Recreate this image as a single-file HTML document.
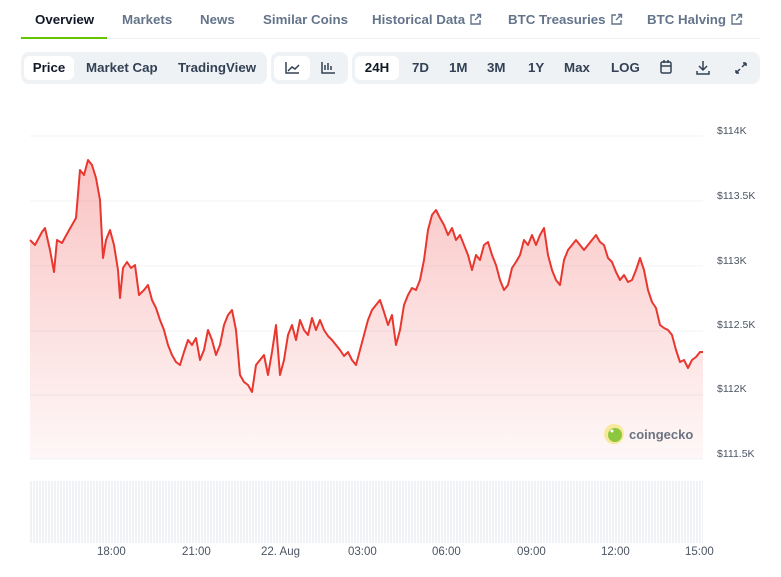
<!DOCTYPE html>
<html><head><meta charset="utf-8"><style>
*{box-sizing:border-box;margin:0;padding:0}
body{width:781px;height:577px;background:#fff;font-family:"Liberation Sans",sans-serif;position:relative;overflow:hidden;color:#4b5563}
.tabs{position:absolute;left:20px;top:0;width:740px;height:39px;border-bottom:1px solid #eef0f3}
.tab{position:absolute;top:12px;font-size:13.3px;font-weight:bold;color:#64748b;white-space:nowrap}
.tab.a{color:#111827}
.ul{position:absolute;left:1px;top:37px;width:86px;height:2px;background:#65c300}
.grp{position:absolute;top:52px;height:32px;background:#eff2f5;border-radius:8px}
.btn{position:absolute;top:4px;height:24px;font-size:13.3px;font-weight:bold;color:#334155;line-height:24px;white-space:nowrap}
.sel{background:#fff;border-radius:6px;color:#111827}
.yl{position:absolute;left:717px;font-size:10.5px;color:#4b5563}
.xl{position:absolute;top:546px;font-size:11.5px;color:#4b5563}
svg{position:absolute;left:0;top:0}
.ext{display:inline-block;vertical-align:-2px;margin-left:4px}
</style></head><body>
<div class="tabs">
<span class="tab a" style="left:15px">Overview</span>
<span class="tab" style="left:102px">Markets</span>
<span class="tab" style="left:180px">News</span>
<span class="tab" style="left:243px">Similar Coins</span>
<span class="tab" style="left:352px">Historical Data<svg class="ext" style="position:static" width="13" height="13"><path d="M6 2H2v9h9V7M8 1.5h3.5V5M11.5 1.5L6 7" fill="none" stroke="#64748b" stroke-width="1.4"/></svg></span>
<span class="tab" style="left:488px">BTC Treasuries<svg class="ext" style="position:static" width="13" height="13"><path d="M6 2H2v9h9V7M8 1.5h3.5V5M11.5 1.5L6 7" fill="none" stroke="#64748b" stroke-width="1.4"/></svg></span>
<span class="tab" style="left:627px">BTC Halving<svg class="ext" style="position:static" width="13" height="13"><path d="M6 2H2v9h9V7M8 1.5h3.5V5M11.5 1.5L6 7" fill="none" stroke="#64748b" stroke-width="1.4"/></svg></span>
<div class="ul"></div>
</div>
<div class="grp" style="left:21px;width:246px">
<span class="btn sel" style="left:3px;width:50px;text-align:center">Price</span>
<span class="btn" style="left:65px">Market Cap</span>
<span class="btn" style="left:157px">TradingView</span>
</div>
<div class="grp" style="left:271px;width:77px">
<span class="btn sel" style="left:3px;width:36px"></span>
<svg width="77" height="32" style="position:absolute;left:0;top:0"><path d="M15 10v11h13M17 19l4-4 3 2 4-4" fill="none" stroke="#334155" stroke-width="1.5"/><path d="M51 10v11h13M54 18v-5M57 18v-7M60 18v-4" fill="none" stroke="#334155" stroke-width="1.5"/></svg>
</div>
<div class="grp" style="left:352px;width:408px">
<span class="btn sel" style="left:3px;width:44px;text-align:center">24H</span>
<span class="btn" style="left:60px">7D</span>
<span class="btn" style="left:97px">1M</span>
<span class="btn" style="left:135px">3M</span>
<span class="btn" style="left:176px">1Y</span>
<span class="btn" style="left:212px">Max</span>
<span class="btn" style="left:259px">LOG</span>
<svg width="408" height="32" style="position:absolute;left:0;top:0"><g fill="none" stroke="#334155" stroke-width="1.5"><rect x="309" y="10" width="10" height="11" rx="1.5"/><path d="M309 14h10M312 8v3M316 8v3"/><path d="M351 9v8M347 14l4 4 4-4M345 19v3h12v-3"/><path d="M384 21l4-4M384 21h3M384 21v-3M394 11l-4 4M394 11h-3M394 11v3"/></g></svg>
</div>
<svg width="781" height="577">
<defs><linearGradient id="g" x1="0" y1="0" x2="0" y2="1"><stop offset="0" stop-color="#ef4444" stop-opacity=".32"/><stop offset="1" stop-color="#ef4444" stop-opacity=".04"/></linearGradient>
<pattern id="v" width="3" height="10" patternUnits="userSpaceOnUse"><rect width="2" height="10" fill="#f0f2f6"/></pattern></defs>
<g stroke="#f1f3f6" stroke-width="1"><path d="M30 136H703M30 201H703M30 266H703M30 331H703M30 395H703M30 459H703"/></g>
<rect x="30" y="481" width="673" height="62" fill="url(#v)"/>
<path d="M30 240L35 245L42 232L45 228L50 250L54 272L57 240L62 243L68 232L72 225L76 218L80 170L84 175L88 160L92 165L96 178L100 200L103 258L106 240L110 230L114 245L118 270L120 298L123 268L127 262L131 268L135 265L139 295L144 290L148 285L152 300L156 308L160 320L164 330L168 345L172 355L176 362L180 365L184 352L188 340L192 345L196 338L200 360L204 350L208 330L212 340L216 355L220 345L224 325L228 315L232 310L236 330L240 375L244 382L248 385L252 392L256 365L260 360L264 355L268 375L272 352L276 325L280 375L284 360L288 335L292 325L296 340L300 320L304 330L308 335L312 318L316 330L320 320L324 330L328 336L332 340L336 345L340 350L344 356L348 352L352 360L356 365L360 350L364 335L368 320L372 310L376 305L380 300L384 312L388 325L392 315L396 345L400 330L404 305L408 295L412 288L416 290L420 280L424 260L428 230L432 215L436 210L440 218L444 225L448 235L452 228L456 240L460 235L464 245L468 255L472 270L476 255L480 260L484 245L488 242L492 255L496 265L500 280L504 290L508 285L512 268L516 262L520 255L524 240L528 245L532 235L536 245L540 235L544 228L548 255L552 270L556 280L560 285L564 260L568 250L572 245L576 240L580 245L584 250L588 245L592 240L596 235L600 242L604 245L608 258L612 262L616 272L620 280L624 275L628 282L632 280L636 270L640 258L644 270L648 290L652 302L656 308L660 325L664 328L668 330L672 335L676 350L680 362L684 360L688 368L692 360L696 357L700 352L703 352L703 459L30 459Z" fill="url(#g)"/>
<path d="M30 240L35 245L42 232L45 228L50 250L54 272L57 240L62 243L68 232L72 225L76 218L80 170L84 175L88 160L92 165L96 178L100 200L103 258L106 240L110 230L114 245L118 270L120 298L123 268L127 262L131 268L135 265L139 295L144 290L148 285L152 300L156 308L160 320L164 330L168 345L172 355L176 362L180 365L184 352L188 340L192 345L196 338L200 360L204 350L208 330L212 340L216 355L220 345L224 325L228 315L232 310L236 330L240 375L244 382L248 385L252 392L256 365L260 360L264 355L268 375L272 352L276 325L280 375L284 360L288 335L292 325L296 340L300 320L304 330L308 335L312 318L316 330L320 320L324 330L328 336L332 340L336 345L340 350L344 356L348 352L352 360L356 365L360 350L364 335L368 320L372 310L376 305L380 300L384 312L388 325L392 315L396 345L400 330L404 305L408 295L412 288L416 290L420 280L424 260L428 230L432 215L436 210L440 218L444 225L448 235L452 228L456 240L460 235L464 245L468 255L472 270L476 255L480 260L484 245L488 242L492 255L496 265L500 280L504 290L508 285L512 268L516 262L520 255L524 240L528 245L532 235L536 245L540 235L544 228L548 255L552 270L556 280L560 285L564 260L568 250L572 245L576 240L580 245L584 250L588 245L592 240L596 235L600 242L604 245L608 258L612 262L616 272L620 280L624 275L628 282L632 280L636 270L640 258L644 270L648 290L652 302L656 308L660 325L664 328L668 330L672 335L676 350L680 362L684 360L688 368L692 360L696 357L700 352L703 352" fill="none" stroke="#e8372f" stroke-width="2" stroke-linejoin="round"/>
<circle cx="614" cy="434" r="10" fill="#f7e89a"/><circle cx="615" cy="435" r="7" fill="#8dc63f"/><circle cx="612" cy="431" r="1.5" fill="#fff"/>
<text x="629" y="439" font-family="Liberation Sans" font-weight="bold" font-size="13" fill="#6b7280">coingecko</text>
</svg>
<span class="yl" style="top:125px">$114K</span>
<span class="yl" style="top:190px">$113.5K</span>
<span class="yl" style="top:255px">$113K</span>
<span class="yl" style="top:319px">$112.5K</span>
<span class="yl" style="top:383px">$112K</span>
<span class="yl" style="top:448px">$111.5K</span>
<span class="xl" style="left:97px">18:00</span>
<span class="xl" style="left:182px">21:00</span>
<span class="xl" style="left:261px">22. Aug</span>
<span class="xl" style="left:348px">03:00</span>
<span class="xl" style="left:432px">06:00</span>
<span class="xl" style="left:517px">09:00</span>
<span class="xl" style="left:601px">12:00</span>
<span class="xl" style="left:685px">15:00</span>
</body></html>
